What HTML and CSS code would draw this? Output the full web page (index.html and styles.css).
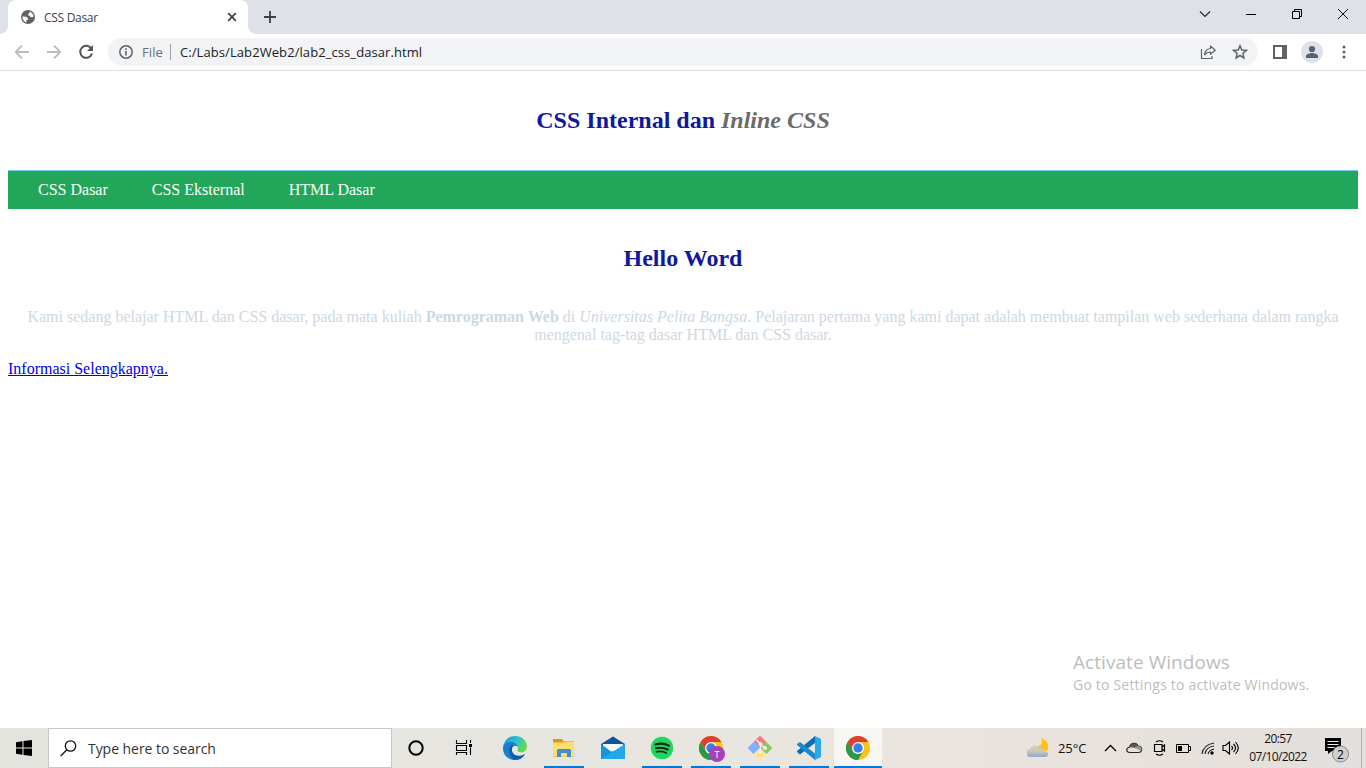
FILE: index.html
```html
<!DOCTYPE html>
<html lang="id">
<head>
<meta charset="utf-8">
<title>CSS Dasar</title>
<link rel="stylesheet" href="styles.css">
</head>
<body>
<div class="screen">
  <div class="tabstrip">
    <div class="tab">
      <svg class="globe" width="14" height="14" viewBox="0 0 14 14"><circle cx="7" cy="7" r="7" fill="#5f6368"/><path d="M1.300 6.600l3.900.2 2 1.700-.5 1.300-1.300.2.200 2.500C3.200 11.900 1.400 9.700 1.300 6.600zM8.300 1.500l.4 1.600-1.500 1-.2 1.200 1.500.3 1 1.400 1.700.2 1.400-.7c-.2-2.500-2-4.400-4.300-5z" fill="#fff"/></svg>
      <span class="tab-title">CSS Dasar</span>
      <svg class="tab-close" width="10" height="10" viewBox="0 0 10 10"><path d="M1.200 1.200l7.600 7.600M8.800 1.200L1.200 8.800" stroke="#3c4043" stroke-width="1.700"/></svg>
    </div>
    <svg class="newtab" width="12" height="12" viewBox="0 0 12 12"><path d="M6 0v12M0 6h12" stroke="#3c4043" stroke-width="1.800"/></svg>
    <div class="winctl">
      <svg width="12" height="12" viewBox="0 0 12 12"><path d="M1 3.500l5 5 5-5" fill="none" stroke="#222" stroke-width="1.100"/></svg>
      <svg width="12" height="12" viewBox="0 0 12 12"><path d="M1 6.500h10" stroke="#000"/></svg>
      <svg width="12" height="12" viewBox="0 0 12 12"><path d="M1.500 3.500h7v7h-7zM3.500 3.500v-2h7v7h-2" fill="none" stroke="#000"/></svg>
      <svg width="12" height="12" viewBox="0 0 12 12"><path d="M1 1l10 10M11 1L1 11" stroke="#111"/></svg>
    </div>
  </div>
  <div class="toolbar">
    <svg class="nav-icon" width="16" height="16" viewBox="0 0 16 16"><path d="M15 8H2M8 1.700L1.700 8 8 14.300" fill="none" stroke="#babcbe" stroke-width="1.800"/></svg>
    <svg class="nav-icon" width="16" height="16" viewBox="0 0 16 16"><path d="M1 8h13M8 1.700L14.300 8 8 14.300" fill="none" stroke="#babcbe" stroke-width="1.800"/></svg>
    <svg class="nav-icon" width="16" height="16" viewBox="0 0 16 16"><path d="M13.300 4.600A6 6 0 1 0 14 9.500" fill="none" stroke="#505459" stroke-width="2"/><path d="M15 1v6H9z" fill="#505459"/></svg>
    <div class="omnibox">
      <svg class="info" width="14" height="14" viewBox="0 0 14 14"><circle cx="7" cy="7" r="6.200" fill="none" stroke="#5f6368" stroke-width="1.500"/><path d="M7 6v4.500M7 3.300v1.600" stroke="#5f6368" stroke-width="1.600"/></svg>
      <span class="scheme">File</span>
      <span class="url">C:/Labs/Lab2Web2/lab2_css_dasar.html</span>
      <svg class="share" width="16" height="16" viewBox="0 0 16 16"><path d="M1.500 5v9.500h10.500v-2.500" fill="none" stroke="#5f6368" stroke-width="1.200"/><path d="M10.500 2l4.700 4.200-4.700 4.100V8C7.500 8 5.800 9 4.500 10.800 4.800 7.300 6.800 4.900 10.500 4.500z" fill="none" stroke="#5f6368" stroke-width="1.200" stroke-linejoin="round"/></svg>
      <svg class="star" width="16" height="16" viewBox="0 0 16 16"><path d="M8 1.800l1.800 4.200 4.500.4-3.400 3 1 4.500L8 11.500l-3.900 2.400 1-4.500-3.400-3 4.500-.4z" fill="none" stroke="#5f6368" stroke-width="1.500"/></svg>
    </div>
    <svg class="panel" width="14" height="14" viewBox="0 0 14 14"><path d="M0 0h14v14H0zM2 2v10h7V2z" fill="#5f6368" fill-rule="evenodd"/></svg>
    <svg class="avatar" width="22" height="22" viewBox="0 0 22 22"><circle cx="11" cy="11" r="11" fill="#dee1e6"/><circle cx="11" cy="8" r="3.100" fill="#56627a"/><path d="M5 17v-2c0-2 4-3 6-3s6 1 6 3v2z" fill="#56627a"/></svg>
    <svg class="menu" width="4" height="14" viewBox="0 0 4 14"><g fill="#5f6368"><circle cx="2" cy="2" r="1.500"/><circle cx="2" cy="7" r="1.500"/><circle cx="2" cy="12" r="1.500"/></g></svg>
  </div>

  <main class="page">
    <h1>CSS Internal dan <i>Inline CSS</i></h1>
    <nav><a>CSS Dasar</a> <a>CSS Eksternal</a> <a>HTML Dasar</a></nav>
    <h1 class="hello">Hello Word</h1>
    <p>Kami sedang belajar HTML dan CSS dasar, pada mata kuliah <b>Pemrograman Web</b> di <i>Universitas Pelita Bangsa</i>. Pelajaran pertama yang kami dapat adalah membuat tampilan web sederhana dalam rangka mengenal tag-tag dasar HTML dan CSS dasar.</p>
    <a class="more" href="#">Informasi Selengkapnya.</a>
    <div class="watermark"><div class="wm-title">Activate Windows</div><div class="wm-sub">Go to Settings to activate Windows.</div></div>
  </main>

  <div class="taskbar">
    <div class="start"><svg width="16" height="16" viewBox="0 0 16 16"><path d="M0 2.200L6.500 1.300V7.500H0zM7.500 1.100L16 0v7.500H7.500zM0 8.500h6.500v6.200L0 13.800zM7.500 8.500H16V16l-8.500-1.100z"/></svg></div>
    <div class="search">
      <svg width="17" height="17" viewBox="0 0 17 17"><circle cx="10.500" cy="6" r="5.200" fill="none" stroke="#111" stroke-width="1.300"/><path d="M6.800 9.800L.7 16" stroke="#111" stroke-width="1.300"/></svg>
      <span>Type here to search</span>
    </div>
    <div class="slot sys"><svg width="18" height="18" viewBox="0 0 18 18"><circle cx="9" cy="9" r="6.700" fill="none" stroke="#000" stroke-width="2"/></svg></div>
    <div class="slot sys"><svg width="18" height="18" viewBox="0 0 18 18"><path d="M1.500 1v3.500h10V1M1.500 16v-2.500h10V16M1.500 6.500h10v5h-10zM15.500 1v3M15.500 8.500V16" fill="none" stroke="#000" stroke-width="1.100"/><path d="M14 5h3v3h-3z"/></svg></div>
    <div class="apps">
      <div class="slot"><svg width="24" height="24" viewBox="0 0 24 24">
        <defs><linearGradient id="eg" x1="0" y1="0" x2="1" y2=".5"><stop offset="0" stop-color="#1793d8"/><stop offset=".55" stop-color="#2bc2d2"/><stop offset="1" stop-color="#65d94e"/></linearGradient></defs>
        <path d="M0 12C1 4 6 0 12 0c7 0 12 5 12 10.500 0 4-3 6-6 6-3.500 0-4.500-1.500-3.500-3 1.500-2.500-.5-5-4-5C6 8.500 1 10 0 12z" fill="url(#eg)"/>
        <path d="M0 12C.5 7.500 5 5.500 8.500 6c4 .5 6.500 3 6.500 5.500-1-2-5-2-6 1-1.300 4.500 3 8 7.500 7.500 2.500-.2 4.500-1.300 5.500-2-2 4-5.500 6-10 6C5 24 0 19 0 12z" fill="#147fd3"/>
        <path d="M9 8.800c-4 3-4 10 1.500 14.500C16 25 20 21.500 22 18c-5 3.500-13 2-13-4 0-1.500.5-2.500 1.500-3.300z" fill="#1558a7"/><path d="M10.300 10.500c1.700-1.500 4.200-.5 4.500 1.300.1 1-.8 1.500-.5 2.800.3 1.200 1.800 1.900 3.700 1.900 1.500 0 3-.5 4.300-1.500-.3 2-2.300 3-5.300 3-4 0-8-1.500-8-4.500 0-1.200.5-2.300 1.300-3z" fill="#e8e6e2"/></svg></div>
      <div class="slot run"><svg width="22" height="20" viewBox="0 0 22 20"><path d="M0 1h9l2 2h10v16H0z" fill="#f4bd3b"/><path d="M0 1h9l1 2-1 1H0z" fill="#d79a16"/><path d="M0 5h10l2-1h9v14.500H0z" fill="#ffdc72"/><path d="M4 19v-6.500q0-1.500 1.500-1.500h11q1.500 0 1.500 1.500V19h-4v-4H8v4z" fill="#3c92d1"/></svg></div>
      <div class="slot"><svg width="24" height="24" viewBox="0 0 24 24"><path d="M0 8L12 .5 24 8v5H0z" fill="#0b559f"/><path d="M2 8h20v7l-10 4L2 15z" fill="#f5f7f8"/><path d="M0 8l10 7.500L16 15l8 8H0z" fill="#1594df"/><path d="M0 23L24 8v15z" fill="#24a8ea"/><path d="M2 8h20l-10 7z" fill="#f5f7f8"/></svg></div>
      <div class="slot run"><svg width="24" height="24" viewBox="0 0 24 24"><circle cx="12" cy="12" r="11.200" fill="#1ed760"/><g fill="none" stroke="#122517" stroke-linecap="round"><path d="M5.500 8.500c4-1.300 9.500-1 13.500 1.200" stroke-width="2.300"/><path d="M6 12.300c4-1.200 8-.7 11.700 1.200" stroke-width="2"/><path d="M6.500 15.800c3.500-.9 6.800-.5 9.800 1.100" stroke-width="1.700"/></g></svg></div>
      <div class="slot run"><svg class="profile-chrome" width="28" height="28" viewBox="0 0 28 28"><circle cx="12" cy="12" r="12" fill="#fbc116"/><path d="M1.600 6A12 12 0 0 1 22.400 6H12L6.800 15z" fill="#df3e32"/><path d="M1.600 6A12 12 0 0 0 12 24l5.200-9L12 18l-5.200-3z" fill="#28994a"/><circle cx="12" cy="12" r="6" fill="#fff"/><circle cx="12" cy="12" r="4.700" fill="#397fea"/><circle cx="18" cy="18" r="8" fill="#a442b8"/><text x="18" y="21.500" text-anchor="middle" class="profile-letter">T</text></svg></div>
      <div class="slot run"><svg width="24" height="24" viewBox="0 0 24 24"><g stroke-width="2" stroke-linejoin="round"><path d="M12 1l5 5-5 5-5-5z" fill="#f37b79" stroke="#f37b79"/><path d="M6 7l5 5-5 5-5-5z" fill="#80b0ff" stroke="#80b0ff"/><path d="M18 7l5 5-5 5-5-5z" fill="#8bca62" stroke="#8bca62"/><path d="M12 13l5 5-5 5-5-5z" fill="#ffe58b" stroke="#ffe58b"/></g><path d="M8.500 4l4 4v8M12.500 8l4 4" fill="none" stroke="#eee" stroke-width="1.500"/><g fill="#eee"><circle cx="12.500" cy="8" r="2"/><circle cx="12.500" cy="16" r="2"/><circle cx="17" cy="12" r="2"/></g></svg></div>
      <div class="slot run"><svg width="24" height="24" viewBox="0 0 24 24"><path d="M18 0v7L3 18.500 0 16v-1z" fill="#0b6eb5"/><path d="M0 9v-1l3-2 15 11.500V24z" fill="#168bd1"/><path d="M18 0l6 3v18l-6 3z" fill="#29a9ec"/></svg></div>
      <div class="slot run active"><svg width="24" height="24" viewBox="0 0 24 24"><circle cx="12" cy="12" r="12" fill="#fbc116"/><path d="M1.600 6A12 12 0 0 1 22.400 6H12L6.800 15z" fill="#df3e32"/><path d="M1.600 6A12 12 0 0 0 12 24l5.200-9L12 18l-5.200-3z" fill="#28994a"/><circle cx="12" cy="12" r="6" fill="#fff"/><circle cx="12" cy="12" r="4.700" fill="#397fea"/></svg></div>
    </div>
    <div class="tray">
      <svg class="weather" width="22" height="20" viewBox="0 0 22 20"><defs><linearGradient id="cl" x1="0" y1="0" x2="0" y2="1"><stop offset="0" stop-color="#d3d4bd"/><stop offset=".55" stop-color="#c3c8be"/><stop offset="1" stop-color="#8aa6c4"/></linearGradient></defs><path d="M14 0c6 2 9 7 6 13l-9-1V8c4-1 5-4 3-8z" fill="#ffbd19"/><path d="M4 19a4 4 0 0 1-1-8c1-4 7-5 9-1 3-1 5 1 5 3 6 0 5 6 1 6z" fill="url(#cl)"/></svg>
      <span class="temp">25°C</span>
      <svg class="chevron" width="13" height="8" viewBox="0 0 13 8"><path d="M1 7l5.500-5.500L12 7" fill="none" stroke="#000" stroke-width="1.300"/></svg>
      <svg class="cloud" width="17" height="12" viewBox="0 0 17 12"><path d="M4 10.500C-.5 10.500 0 5.800 3.500 5.300 4.500.5 10.500 0 12 4c5 .2 4.800 6.500.5 6.500z" fill="#e4e2df" stroke="#222" stroke-width="1.100"/><path d="M3.500 5.300C4.500.5 10.500 0 12 4L8.500 6C7 5 5 5 3.500 5.300z" fill="#555"/><path d="M8.500 6L12 4c3 0 4.500 3 3 5z" fill="#999"/></svg>
      <svg class="meet" width="14" height="16" viewBox="0 0 14 16"><path d="M3 2Q6.500-.5 10 2M3 14q3.500 2.500 7 0M1.500 4.500h7.500v7H1.500zM9 7l2.500-2v6L9 9" fill="none" stroke="#000" stroke-width="1.200"/></svg>
      <svg class="battery" width="15" height="9" viewBox="0 0 15 9"><path d="M.5.500h12v8H.5zM13 2.500h1.500v4H13" fill="none" stroke="#000"/><path d="M2 2h4v5H2z"/></svg>
      <svg class="wifi" width="14" height="13" viewBox="0 0 14 13"><g fill="none" stroke="#222" stroke-width="1.200"><path d="M1 12Q2 3 13 1"/><path d="M4 12Q5 5 13 4"/><path d="M7 12Q8 8 13 7"/></g><circle cx="11" cy="11" r="1.700"/></svg>
      <svg class="volume" width="18" height="14" viewBox="0 0 18 14"><path d="M1 4.500h2.500l4-3.500v12l-4-3.500H1zM9.500 5q2 2 0 4M11.500 3q4 4 0 8M13.500 1q5.500 6 0 12" fill="none" stroke="#000" stroke-width="1.100"/></svg>
      <div class="clock"><div class="time">20:57</div><div class="date">07/10/2022</div></div>
      <svg class="notice" width="26" height="26" viewBox="0 0 26 26"><path d="M1 1h16v13H8l-4 3v-3H1z"/><path d="M3.500 4.500h11M3.500 7.500h11M3.500 10.500h7" stroke="#eee"/><circle cx="16.500" cy="17" r="8" fill="#d0cfcd" stroke="#777" stroke-width=".8"/><text x="16.500" y="21.500" text-anchor="middle" class="notice-count">2</text></svg>
      <div class="desktop-edge"></div>
    </div>
  </div>
</div>
</body>
</html>
```

FILE: styles.css
```css
* { box-sizing: border-box; }
body { margin: 0; overflow: hidden; background: #fff; }
svg { display: block; flex: none; }
.screen { width: 1366px; height: 768px; display: flex; flex-direction: column; font-family: "Open Sans", "Noto Sans", sans-serif; }

.tabstrip { height: 34px; flex: none; display: flex; background: #dee1e6; padding-left: 8px; }
.tab { position: relative; width: 240px; height: 34px; background: #fff; border-radius: 8px 8px 0 0; display: flex; align-items: center; padding: 0 11px 0 13px; }
.tab::before, .tab::after { content: ""; position: absolute; bottom: 0; width: 8px; height: 8px; }
.tab::before { left: -8px; background: radial-gradient(circle at 0 0, transparent 7.500px, #fff 8px); }
.tab::after { right: -8px; background: radial-gradient(circle at 100% 0, transparent 7.500px, #fff 8px); }
.tab-title { margin-left: 9px; font-size: 12px; letter-spacing: -0.3px; color: #3c4043; flex: 1; }
.newtab { margin: 11px 0 0 16px; }
.winctl { margin: 8px 17px 0 auto; display: flex; gap: 34px; }

.toolbar { height: 37px; flex: none; display: flex; align-items: center; border-bottom: 1px solid #dadce0; padding-left: 14px; }
.nav-icon { margin-right: 16px; }
.omnibox { width: 1150px; height: 28px; border-radius: 14px; background: #f1f3f4; margin-left: -2px; display: flex; align-items: center; padding: 0 10px 0 11px; font-size: 14px; }
.scheme { margin-left: 9px; width: 29px; height: 16px; line-height: 16px; border-right: 1px solid #9aa0a6; color: #6b6f74; font-size: 13px; letter-spacing: 0.1px; }
.url { margin-left: 9px; flex: 1; color: #202124; font-size: 13px; letter-spacing: 0.08px; white-space: nowrap; }
.star { margin-left: 16px; }
.panel { margin-left: 15px; }
.avatar { margin-left: 14px; }
.menu { margin-left: 19px; }

.page { position: relative; flex: 1; padding: 35px 8px 0; font-family: "Liberation Serif", "Times New Roman", serif; font-size: 16px; line-height: 18px; }
.page h1 { margin: 0; font-size: 24px; line-height: 28px; text-align: center; color: #0f189f; }
.page h1 i { color: #6d6a6b; }
.page nav { height: 39px; margin-top: 36px; border-top: 1px solid #77ccef; background: #22a65a; padding: 10px; color: #fff; }
.page nav a { padding: 10px 20px; }
.page .hello { margin-top: 35px; }
.page p { margin: 36px 0 16px; text-align: center; color: #ccd8e4; }
.more { color: #00e; text-decoration: underline; }
.watermark { position: absolute; left: 1073px; top: 577px; font-family: "Open Sans", "Noto Sans", sans-serif; color: #bdbdbd; white-space: nowrap; }
.wm-title { font-size: 19px; line-height: 28px; letter-spacing: 0.06px; }
.wm-sub { font-size: 14px; line-height: 18px; letter-spacing: 0.2px; }

.taskbar { height: 40px; flex: none; display: flex; background: linear-gradient(90deg, #e4e4df, #e9e6e0 58%, #e9e2dd 80%, #e2dfdc); }
.start { width: 48px; display: flex; align-items: center; justify-content: center; }
.search { width: 344px; height: 40px; background: #fff; border: 1px solid #c7c7c7; display: flex; align-items: center; padding-left: 11px; font-size: 14px; letter-spacing: -0.05px; color: #333; }
.search span { margin-left: 11px; }
.slot { width: 49px; height: 40px; display: flex; align-items: center; justify-content: center; }
.sys { width: 48px; }
.apps { display: flex; margin-left: 2px; }
.run { background: linear-gradient(#0078d7, #0078d7) center bottom / 40px 2px no-repeat; }
.active { width: 48px; margin-left: 1px; background: linear-gradient(#0078d7, #0078d7) center bottom / 48px 2px no-repeat #f7f6f2; }
.profile-chrome { margin: 4px 0 0 4px; }
.profile-letter { font: 9px "Open Sans", sans-serif; fill: #fff; }
.tray { display: flex; align-items: center; margin-left: auto; height: 40px; color: #111; }
.temp { margin-left: 9px; width: 30px; font-size: 13px; letter-spacing: -0.1px; }
.chevron { margin-left: 16px; }
.cloud { margin-left: 9px; }
.meet { margin-left: 10px; }
.battery { margin-left: 9px; }
.wifi { margin-left: 10px; }
.volume { margin-left: 7px; }
.clock { margin-left: 8px; width: 60px; font-size: 12px; line-height: 18px; text-align: center; white-space: nowrap; margin-top: -1px; letter-spacing: -0.6px; }
.notice { margin: 3px 0 0 16px; }
.notice-count { font: 12px "Open Sans", sans-serif; }
.desktop-edge { margin-left: 11px; width: 5px; height: 40px; border-left: 1px solid #b5b3b1; }
```
